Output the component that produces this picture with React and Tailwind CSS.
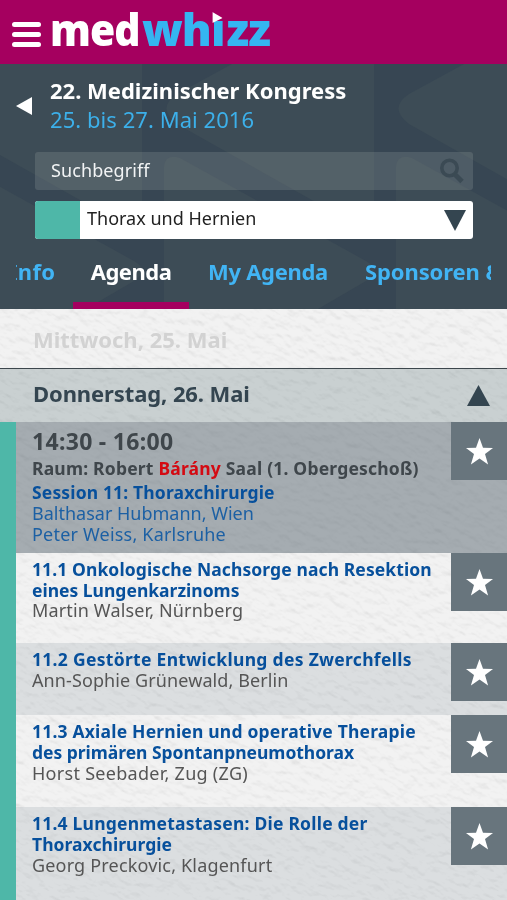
const Star = () => (
  <div className="flex h-[58px] w-14 shrink-0 items-center justify-center bg-[#68757d]">
    <svg viewBox="0 0 27 27" className="h-[27px] w-[27px]" fill="#fff">
      <path d="M13.5 0 L17 9.7 L27 9.9 L19 16.1 L22.1 26.5 L13.5 20.6 L4.9 26.5 L8 16.1 L0 9.9 L10 9.7 Z" />
    </svg>
  </div>
);

// Embossed paper grain behind the agenda
const Paper = () => (
  <svg className="pointer-events-none absolute inset-0 h-full w-full opacity-40 mix-blend-multiply" aria-hidden="true">
    <filter id="paper" x="0" y="0" width="100%" height="100%" colorInterpolationFilters="sRGB">
      <feTurbulence type="fractalNoise" baseFrequency="0.08 0.14" numOctaves="4" seed="4" />
      <feDiffuseLighting surfaceScale="0.8" diffuseConstant="1.12" lightingColor="#ffffff">
        <feDistantLight azimuth="235" elevation="62" />
      </feDiffuseLighting>
    </filter>
    <rect x="-100" y="-400" width="1000" height="1400" transform="rotate(32)" filter="url(#paper)" />
  </svg>
);

// Play-button shapes that repeat across the header
const Shapes = ({ x }) => (
  <g transform={`translate(${x} 0)`} fill="#3d4c56">
    <path d="M232 64 L177 94 Q156 108 177 124 L374 235 V64Z" />
    <path d="M164 309 V167 Q165 153 180 158 L366 261 Q382 270 366 281 L318 309Z" />
  </g>
);

const talks = [
  { h: "h-[90px]", bg: "", lines: [["11.1 Onkologische Nachsorge nach Resektion", "tracking-[0.1px]"], ["eines Lungenkarzinoms", "tracking-[0px]"]], who: "Martin Walser, Nürnberg", c: "-mt-px tracking-[0.15px]" },
  { h: "h-[72px]", bg: "bg-[#536876]/14", lines: [["11.2 Gestörte Entwicklung des Zwerchfells", "tracking-[0.3px]"]], who: "Ann-Sophie Grünewald, Berlin", c: "tracking-[0.1px]" },
  { h: "h-[92px]", bg: "", lines: [["11.3 Axiale Hernien und operative Therapie", "tracking-[0.2px]"], ["des primären Spontanpneumothorax", "tracking-[-0.03px]"]], who: "Horst Seebader, Zug (ZG)", c: "tracking-[0.28px]" },
  { h: "h-[93px]", bg: "bg-[#536876]/14", lines: [["11.4 Lungenmetastasen: Die Rolle der", "tracking-[0.22px]"], ["Thoraxchirurgie", "tracking-[0.05px]"]], who: "Georg Preckovic, Klagenfurt", c: "tracking-[0.18px]" },
];

export default function App() {
  return (
    <div className="flex h-[900px] w-[507px] flex-col overflow-hidden whitespace-nowrap bg-[#f0f0f0] font-['Noto_Sans',sans-serif]">
      <header className="flex h-16 shrink-0 items-start bg-[#a5005f] pl-3">
        <div className="mt-[22px] flex w-[29px] flex-col gap-[5px]">
          <i className="h-[5px] rounded-full bg-white" />
          <i className="h-[5px] rounded-full bg-white" />
          <i className="h-[5px] rounded-full bg-white" />
        </div>
        <div className="ml-[9px] flex pt-px text-[44px] font-black leading-[60px] text-white">
          <span className="-mt-[2px] w-[92px] origin-left scale-x-[0.93] tracking-[-1px]">med</span>
          <span className="-mt-[2px] origin-left scale-x-[1.02] tracking-[-1px] text-[#35b5f1]">
            wh
            <span className="relative">
              ı
              <svg className="absolute left-[1px] top-[13px] h-[11px] w-[10px]" viewBox="0 0 10 11"><path d="M0 0 L10 6 L0 11Z" fill="#fff" /></svg>
            </span>
            <span className="ml-[2px]">zz</span>
          </span>
        </div>
      </header>

      <section className="relative h-[245px] shrink-0 overflow-hidden bg-[#374653]">
        <svg className="absolute inset-0 h-full w-full" viewBox="0 64 507 245" aria-hidden="true">
          <Shapes x={-232} />
          <Shapes x={0} />
          <Shapes x={232} />
        </svg>
        <div className="relative flex h-full flex-col">
          <div className="flex h-[88px] pl-4">
            <svg className="mt-[33px] h-[18px] w-4" viewBox="0 0 16 18"><path d="M0 9 L16 0 V18Z" fill="#fff" /></svg>
            <div className="ml-[18px] mt-[12px] leading-[29px]">
              <div className="text-[22px] font-bold text-white">22. Medizinischer Kongress</div>
              <div className="text-[22px] tracking-[0.05px] text-[#3cb0ea]">25. bis 27. Mai 2016</div>
            </div>
          </div>
          <div className="ml-[35px] flex h-[38px] w-[438px] items-center rounded-[3px] bg-[#c4cbc4]/17 pl-4 pr-[9px] text-[18px] tracking-[0.1px] text-[#f2f4f5]">
            <span className="mb-[2px]">Suchbegriff</span>
            <svg className="ml-auto h-[26px] w-6" viewBox="0 0 24 26" fill="none" stroke="#3b4a54"><circle cx="9.5" cy="10" r="7.7" strokeWidth="3.6" /><path d="M14.5 16 L22 23.5" strokeWidth="5" /></svg>
          </div>
          <div className="ml-[35px] mt-[11px] flex h-[38px] w-[438px] items-center overflow-hidden rounded-[3px] bg-white pr-[7px] text-[18px] text-[#222]">
            <i className="h-full w-[45px] bg-[#4eb7a8]" />
            <span className="mb-1 ml-[7px]">Thorax und Hernien</span>
            <svg className="ml-auto h-[21px] w-[22px]" viewBox="0 0 22 21"><path d="M0 0 H22 L11 21Z" fill="#344550" /></svg>
          </div>
          <nav className="ml-4 flex h-[70px] w-[475px] overflow-hidden text-[22px] font-bold leading-[65px] text-[#41b4f4]">
            <span className="-ml-[7px] w-16 shrink-0 tracking-[0.3px]">Info</span>
            <span className="w-[116px] shrink-0 border-b-[7px] border-[#a5005f] text-center tracking-[-0.5px] text-white">Agenda</span>
            <span className="w-[176px] shrink-0 pl-[19px] tracking-[-0.3px]">My Agenda</span>
            <span className="shrink-0 tracking-[-0.1px]">Sponsoren &amp;</span>
          </nav>
        </div>
      </section>

      <main className="relative flex flex-1 flex-col overflow-hidden bg-[#f2f2f2] text-[17.5px] leading-[21px]">
        <Paper />
        <div className="relative flex flex-1 flex-col">
          <div className="h-[59px] pl-[33px] text-[22px] font-bold leading-[60px] text-[#d2d2d2]">Mittwoch, 25. Mai</div>
          <div className="flex h-[54px] items-center justify-between border-t border-[#3c464c] bg-[#36535c]/21 pl-[33px] pr-[17px] text-[22px] font-bold text-[#344550]">
            <span className="mb-1 tracking-[-0.1px]">Donnerstag, 26. Mai</span>
            <svg className="h-[21px] w-[23px]" viewBox="0 0 23 21"><path d="M11.5 0 L23 21 H0Z" fill="#344550" /></svg>
          </div>
          <div className="flex flex-1 flex-col border-l-[16px] border-[#4eb7a8]">
            <div className="flex h-[131px] shrink-0 justify-between bg-[#586670]/50 pl-4">
              <div className="pt-[6px]">
                <div className="mb-[6px] text-[23px] font-bold leading-[27px] tracking-[0.3px] text-[#3f464b]">14:30 - 16:00</div>
                <div className="-mt-[3px] mb-[3px] font-bold tracking-[0.2px] text-[#3f464b]">Raum: Robert <span className="text-[#d40a12]">Bárány</span> Saal (1. Obergeschoß)</div>
                <div className="font-bold tracking-[0.15px] text-[#07509c]">Session 11: Thoraxchirurgie</div>
                <div className="text-[18px] text-[#1c60a4]">Balthasar Hubmann, Wien</div>
                <div className="text-[18px] tracking-[0.2px] text-[#1c60a4]">Peter Weiss, Karlsruhe</div>
              </div>
              <Star />
            </div>
            {talks.map((t) => (
              <div key={t.who} className={`flex shrink-0 justify-between pl-4 ${t.h} ${t.bg}`}>
                <div className="pt-[6px]">
                  {t.lines.map(([s, c]) => <div key={s} className={`font-bold text-[#07509c] ${c}`}>{s}</div>)}
                  <div className={`text-[18px] text-[#555] ${t.c}`}>{t.who}</div>
                </div>
                <Star />
              </div>
            ))}
          </div>
        </div>
      </main>
    </div>
  );
}
